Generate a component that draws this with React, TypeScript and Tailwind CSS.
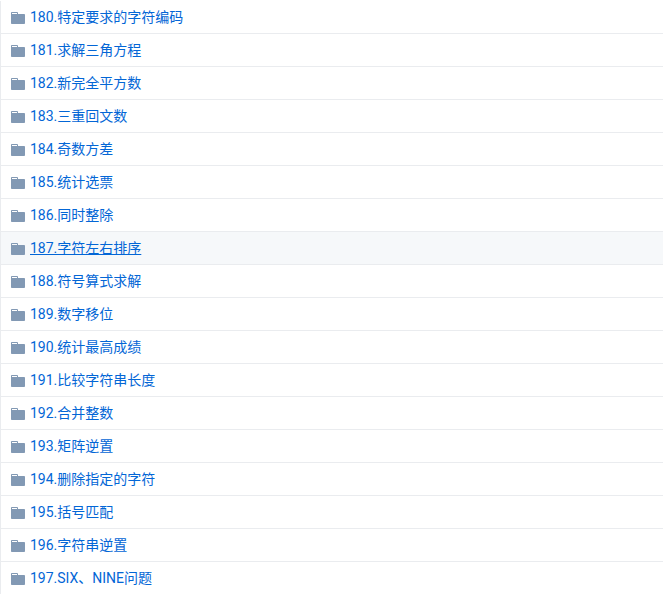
const rows = [
  "180.特定要求的字符编码",
  "181.求解三角方程",
  "182.新完全平方数",
  "183.三重回文数",
  "184.奇数方差",
  "185.统计选票",
  "186.同时整除",
  "187.字符左右排序",
  "188.符号算式求解",
  "189.数字移位",
  "190.统计最高成绩",
  "191.比较字符串长度",
  "192.合并整数",
  "193.矩阵逆置",
  "194.删除指定的字符",
  "195.括号匹配",
  "196.字符串逆置",
  "197.SIX、NINE问题",
];

function FolderIcon() {
  return (
    <svg width="14" height="16" viewBox="0 0 14 16" className="mt-[2px] shrink-0 text-[#8299b4]" fill="currentColor">
      <path d="M13 4H7V3c0-.66-.31-1-1-1H1c-.55 0-1 .45-1 1v10c0 .55.45 1 1 1h12c.55 0 1-.45 1-1V5c0-.55-.45-1-1-1zM6 4H1V3h5v1z" />
    </svg>
  );
}

export default function App() {
  return (
    <div className="h-[594px] w-[663px] overflow-hidden bg-white pt-px font-['Roboto','Noto_Sans_CJK_SC',sans-serif] text-sm">
      <div className="border-l border-[#eaecef]">
        {rows.map((name) => {
          const active = name.startsWith("187");
          return (
            <div
              key={name}
              className={`flex h-[33px] items-center gap-[5px] border-b border-[#eaecef] pl-[10px] ${active ? "bg-[#f6f8fa]" : ""}`}
            >
              <FolderIcon />
              <a href="#" className={`text-[#0366d6] ${active ? "underline" : ""}`}>
                {name}
              </a>
            </div>
          );
        })}
      </div>
    </div>
  );
}
